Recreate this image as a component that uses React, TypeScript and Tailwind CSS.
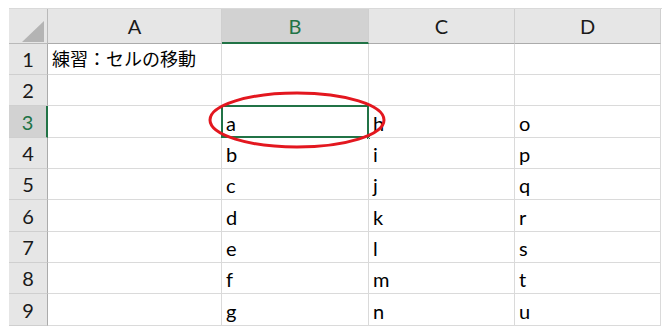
import React from "react";

const cols = ["A", "B", "C", "D"];
const rowHeights = [31, 31, 32, 31, 31, 32, 31, 31, 32];

const data: Record<string, string> = {
  A1: "練習：セルの移動",
  B3: "a", B4: "b", B5: "c", B6: "d", B7: "e", B8: "f", B9: "g",
  C3: "h", C4: "i", C5: "j", C6: "k", C7: "l", C8: "m", C9: "n",
  D3: "o", D4: "p", D5: "q", D6: "r", D7: "s", D8: "t", D9: "u",
};

function Corner() {
  return (
    <div className="relative bg-[#e6e6e6] border-r border-b border-[#b9b9b9]">
      <svg className="absolute left-[13px] top-[12px]" width="22" height="21" viewBox="0 0 22 21">
        <polygon points="22,0 22,21 0,21" fill="#b4b4b4" />
      </svg>
    </div>
  );
}

function ColHeader({ label }: { label: string }) {
  const active = label === "B";
  return (
    <div
      className={
        active
          ? "flex items-center justify-center bg-[#d2d2d2] border-r border-[#cfcfcf] border-b-2 border-b-[#217346] text-[#217346]"
          : "flex items-center justify-center bg-[#e6e6e6] border-r border-[#cfcfcf] border-b border-b-[#ababab] text-[#1a1a1a]"
      }
    >
      <span className="text-[20px] leading-none">{label}</span>
    </div>
  );
}

function RowHeader({ n }: { n: number }) {
  const active = n === 3;
  return (
    <div
      className={
        active
          ? "flex items-center justify-center bg-[#d2d2d2] border-b border-[#cfcfcf] border-r-2 border-r-[#217346] text-[#217346]"
          : "flex items-center justify-center bg-[#e6e6e6] border-b border-[#cfcfcf] border-r border-r-[#ababab] text-[#1a1a1a]"
      }
    >
      <span className="text-[20px] leading-none">{n}</span>
    </div>
  );
}

function Cell({ id }: { id: string }) {
  const text = data[id];
  const selected = id === "B3";
  return (
    <div className="relative flex items-center pl-[4px] border-r border-b border-[#dadada] text-black overflow-visible whitespace-nowrap">
      {text && (
        <span className={id === "A1" ? "text-[18px] leading-none" : "text-[20px] leading-none pt-[2px]"}>
          {text}
        </span>
      )}
      {selected && (
        <div className="absolute -left-[1px] -top-[1px] -right-[1px] -bottom-[1px] border-2 border-[#217346]">
          <div className="absolute -right-[4px] -bottom-[4px] w-[5px] h-[5px] bg-[#217346] border border-white" />
        </div>
      )}
    </div>
  );
}

export default function App() {
  return (
    <div
      className="w-[670px] h-[334px] bg-white pt-[8px] pl-[9px] overflow-hidden"
      style={{ fontFamily: 'Lato, "Noto Sans CJK JP", sans-serif' }}
    >
      <div className="relative w-[653px]">
        <div
          className="grid border-t border-[#d9d9d9]"
          style={{
            gridTemplateColumns: "39px 174px 147px 146px 146px",
            gridTemplateRows: ["35px", ...rowHeights.map((h) => h + "px")].join(" "),
          }}
        >
          <Corner />
          {cols.map((c) => (
            <ColHeader key={c} label={c} />
          ))}
          {rowHeights.map((_, i) => (
            <React.Fragment key={i}>
              <RowHeader n={i + 1} />
              {cols.map((c) => (
                <Cell key={c} id={c + (i + 1)} />
              ))}
            </React.Fragment>
          ))}
        </div>
        <svg className="absolute left-[198px] top-[83px] pointer-events-none" width="182" height="60" viewBox="0 0 182 60">
          <ellipse cx="90" cy="29" rx="87" ry="27" fill="none" stroke="#e3171f" strokeWidth="3" />
        </svg>
      </div>
    </div>
  );
}
